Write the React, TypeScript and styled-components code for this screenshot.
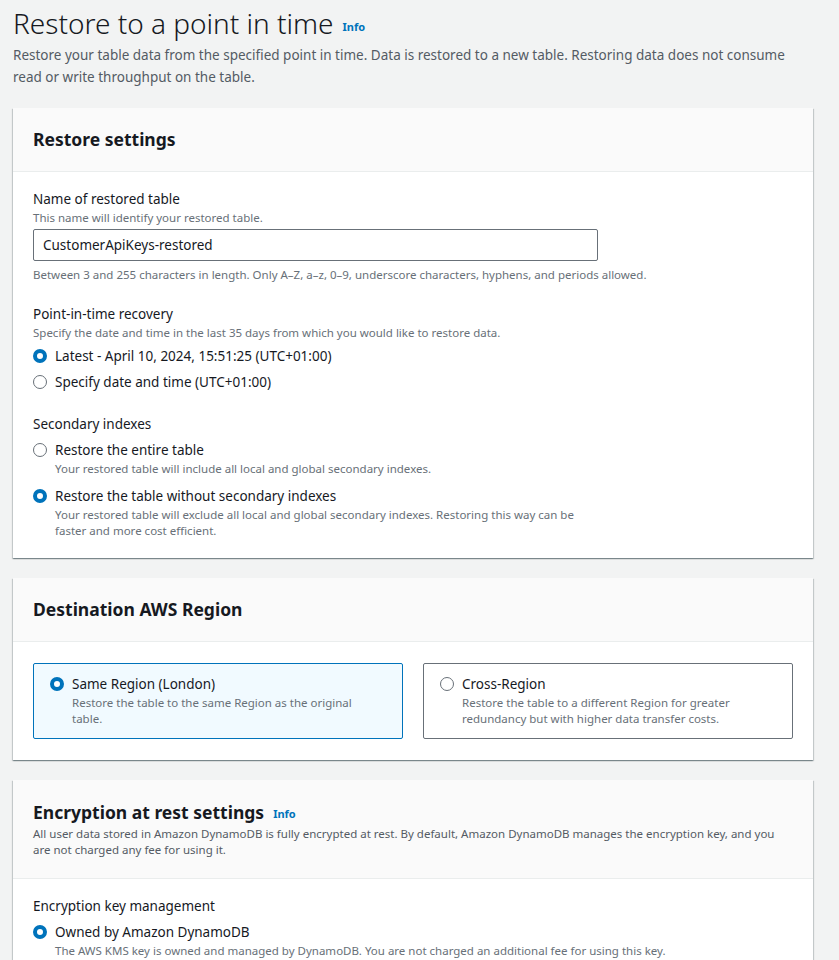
import { FC, ReactNode } from "react";
import styled, { createGlobalStyle } from "styled-components";

const GlobalStyle = createGlobalStyle`
  body {
    margin: 0;
    background: #f2f3f3;
    font-family: "Noto Sans", "Open Sans", sans-serif;
    color: #16191f;
  }
`;

const Page = styled.div`
  padding: 0 26px 40px 13px;
`;

const PageHeader = styled.div`
  padding: 4px 0 20px;
`;

const Title = styled.h1`
  margin: 0;
  font-size: 28px;
  line-height: 38px;
  font-weight: 300;
  color: #16191f;
`;

const InfoLink = styled.a`
  margin-left: 9px;
  font-size: 11px;
  font-weight: 700;
  color: #0073bb;
  text-decoration: none;
  vertical-align: middle;
`;

const Lead = styled.p`
  margin: -2px 0 0;
  font-size: 13.5px;
  line-height: 22px;
  color: #545b64;
`;

const Card = styled.section`
  background: #fff;
  margin-bottom: 20px;
  box-shadow: 0 1px 1px 0 rgba(0, 28, 36, 0.3),
    1px 1px 1px 0 rgba(0, 28, 36, 0.15),
    -1px 1px 1px 0 rgba(0, 28, 36, 0.15);
`;

const CardHeader = styled.div<{ $withDesc?: boolean }>`
  background: #fafafa;
  border-bottom: 1px solid #eaeded;
  padding: ${(p) => (p.$withDesc ? "20px" : "19px")} 20px 20px;
`;

const CardTitle = styled.h2`
  margin: 0;
  font-size: 17.5px;
  line-height: 24px;
  font-weight: 700;
  color: #16191f;
`;

const HeaderDesc = styled.p`
  margin: 0;
  font-size: 11.5px;
  line-height: 16px;
  color: #545b64;
`;

const CardBody = styled.div`
  padding: 17px 20px 15px;
  display: flex;
  flex-direction: column;
  gap: 21px;
`;

const Field = styled.div`
  display: flex;
  flex-direction: column;
`;

const Label = styled.div`
  font-size: 13.5px;
  line-height: 21px;
  color: #16191f;
`;

const Hint = styled.div`
  font-size: 11.5px;
  line-height: 16px;
  color: #687078;
`;

const Constraint = styled(Hint)`
  margin-top: 6px;
`;

const TextInput = styled.input`
  margin-top: 3px;
  width: 565px;
  height: 32px;
  box-sizing: border-box;
  border: 1px solid #687078;
  border-radius: 2px;
  padding: 4px 9px;
  font-family: inherit;
  font-size: 13.5px;
  color: #16191f;
  outline: none;
`;

const RadioList = styled.div`
  display: flex;
  flex-direction: column;
  gap: 4px;
  margin-top: 4px;
`;

const RadioRow = styled.label`
  display: grid;
  grid-template-columns: 14px 1fr;
  column-gap: 8px;
  align-items: start;
`;

const RadioDot = styled.span<{ $checked?: boolean }>`
  width: 14px;
  height: 14px;
  box-sizing: border-box;
  border-radius: 50%;
  margin-top: 4px;
  background: #fff;
  border: ${(p) => (p.$checked ? "4px solid #0073bb" : "1.5px solid #687078")};
`;

const RadioLabel = styled.span`
  font-size: 13.5px;
  line-height: 22px;
  color: #16191f;
`;

const RadioDesc = styled.span<{ $maxWidth?: number }>`
  grid-column: 2;
  font-size: 11.5px;
  line-height: 16px;
  color: #687078;
  max-width: ${(p) => (p.$maxWidth ? `${p.$maxWidth}px` : "none")};
  margin-bottom: 4px;
`;

const TileGrid = styled.div`
  display: grid;
  grid-template-columns: 1fr 1fr;
  gap: 20px;
  padding: 4px 0 6px;
`;

const Tile = styled.div<{ $selected?: boolean }>`
  border: 1px solid ${(p) => (p.$selected ? "#0073bb" : "#687078")};
  background: ${(p) => (p.$selected ? "#f1faff" : "#fff")};
  border-radius: 2px;
  padding: 9px 16px 7px;
`;

type RadioProps = { label: string; desc?: string; checked?: boolean; descWidth?: number };

const Radio: FC<RadioProps> = ({ label, desc, checked, descWidth }) => (
  <RadioRow>
    <RadioDot $checked={checked} />
    <RadioLabel>{label}</RadioLabel>
    {desc && <RadioDesc $maxWidth={descWidth}>{desc}</RadioDesc>}
  </RadioRow>
);

const Container: FC<{ title: ReactNode; desc?: string; children: ReactNode }> = ({
  title,
  desc,
  children,
}) => (
  <Card>
    <CardHeader $withDesc={!!desc}>
      <CardTitle>{title}</CardTitle>
      {desc && <HeaderDesc>{desc}</HeaderDesc>}
    </CardHeader>
    <CardBody>{children}</CardBody>
  </Card>
);

export default function App() {
  return (
    <>
      <GlobalStyle />
      <Page>
        <PageHeader>
          <Title>
            Restore to a point in time<InfoLink href="#">Info</InfoLink>
          </Title>
          <Lead>
            Restore your table data from the specified point in time. Data is restored to a new
            table. Restoring data does not consume read or write throughput on the table.
          </Lead>
        </PageHeader>

        <Container title="Restore settings">
          <Field>
            <Label>Name of restored table</Label>
            <Hint>This name will identify your restored table.</Hint>
            <TextInput defaultValue="CustomerApiKeys-restored" />
            <Constraint>
              Between 3 and 255 characters in length. Only A–Z, a–z, 0–9, underscore characters,
              hyphens, and periods allowed.
            </Constraint>
          </Field>

          <Field>
            <Label>Point-in-time recovery</Label>
            <Hint>Specify the date and time in the last 35 days from which you would like to restore data.</Hint>
            <RadioList>
              <Radio checked label="Latest - April 10, 2024, 15:51:25 (UTC+01:00)" />
              <Radio label="Specify date and time (UTC+01:00)" />
            </RadioList>
          </Field>

          <Field>
            <Label>Secondary indexes</Label>
            <RadioList>
              <Radio
                label="Restore the entire table"
                desc="Your restored table will include all local and global secondary indexes."
                descWidth={545}
              />
              <Radio
                checked
                label="Restore the table without secondary indexes"
                desc="Your restored table will exclude all local and global secondary indexes. Restoring this way can be faster and more cost efficient."
                descWidth={545}
              />
            </RadioList>
          </Field>
        </Container>

        <Container title="Destination AWS Region">
          <TileGrid>
            <Tile $selected>
              <Radio
                checked
                label="Same Region (London)"
                desc="Restore the table to the same Region as the original table."
                descWidth={300}
              />
            </Tile>
            <Tile>
              <Radio
                label="Cross-Region"
                desc="Restore the table to a different Region for greater redundancy but with higher data transfer costs."
                descWidth={300}
              />
            </Tile>
          </TileGrid>
        </Container>

        <Container
          title={
            <>
              Encryption at rest settings<InfoLink href="#">Info</InfoLink>
            </>
          }
          desc="All user data stored in Amazon DynamoDB is fully encrypted at rest. By default, Amazon DynamoDB manages the encryption key, and you are not charged any fee for using it."
        >
          <Field>
            <Label>Encryption key management</Label>
            <RadioList>
              <Radio
                checked
                label="Owned by Amazon DynamoDB"
                desc="The AWS KMS key is owned and managed by DynamoDB. You are not charged an additional fee for using this key."
              />
              <Radio
                label="AWS managed key"
                desc="Key alias: aws/dynamodb. Key is stored in your account and is managed by AWS Key Management Service (AWS KMS). AWS KMS charges apply."
              />
            </RadioList>
          </Field>
        </Container>
      </Page>
    </>
  );
}
